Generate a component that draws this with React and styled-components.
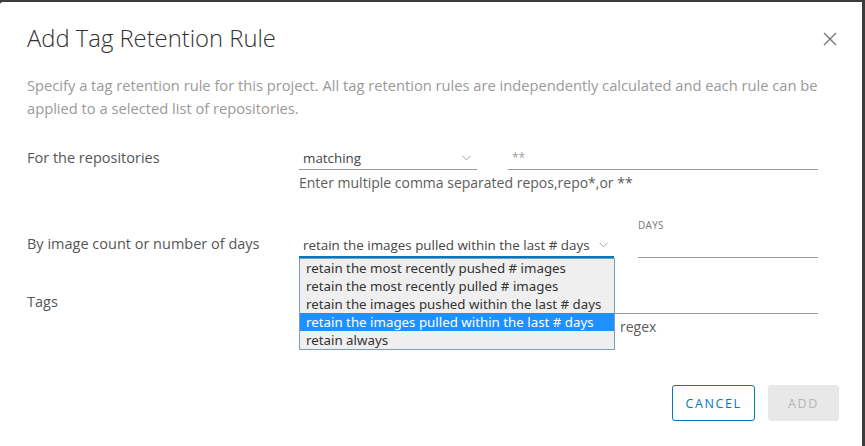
import React from "react";
import styled, { createGlobalStyle } from "styled-components";

const Global = createGlobalStyle`
  html, body { margin: 0; padding: 0; background: #3c3c3c; overflow: hidden; }
  body { font-family: "Open Sans", "Liberation Sans", sans-serif; }
  #root { height: 446px; }
`;

const Modal = styled.div`
  margin-top: 2px;
  width: 862px;
  height: 460px;
  background: #fff;
  border-top-left-radius: 3px;
  box-sizing: border-box;
  padding: 0 0 0 27px;
`;

const Header = styled.div`
  display: flex;
  align-items: center;
  justify-content: space-between;
  height: 72px;
  padding-right: 24px;
`;

const Title = styled.h3`
  margin: 0;
  font-size: 23.8px;
  font-weight: 300;
  color: #313131;
`;

const Close = styled.button`
  border: 0;
  background: none;
  padding: 0;
  width: 16px;
  height: 16px;
  display: flex;
  margin-top: 1px;
`;

const Desc = styled.p`
  margin: 0;
  font-size: 14.7px;
  line-height: 23px;
  color: #9a9a9a;
  padding-right: 12px;
`;

const Form = styled.div`
  margin-top: 26px;
  display: flex;
  flex-direction: column;
`;

const Row = styled.div`
  display: grid;
  grid-template-columns: 272px 1fr;
  align-items: start;
  margin-top: ${(p) => p.$mt || 0}px;
`;

const Label = styled.div`
  font-size: 14.5px;
  color: #565656;
  line-height: 20px;
  padding-top: ${(p) => p.$pt || 0}px;
`;

const Controls = styled.div`
  display: flex;
  flex-direction: column;
`;

const Line = styled.div`
  display: flex;
  align-items: flex-end;
  gap: ${(p) => p.$gap}px;
`;

const SelectWrap = styled.div`
  position: relative;
`;

const Select = styled.div`
  width: ${(p) => p.$w}px;
  height: 24px;
  box-sizing: border-box;
  display: flex;
  align-items: center;
  justify-content: space-between;
  padding: 0 6px 0 4px;
  border-bottom: ${(p) => (p.$focus ? "2px solid #0079b8" : "1px solid #9a9a9a")};
  font-size: 13.4px;
  color: #454545;
`;

const Input = styled.div`
  width: ${(p) => p.$w}px;
  height: 24px;
  box-sizing: border-box;
  padding: 0 4px;
  display: flex;
  align-items: center;
  border-bottom: 1px solid #9a9a9a;
  font-size: 12px;
  color: #a0a0a0;
`;

const Helper = styled.div`
  font-size: 14px;
  color: #5c5c5c;
  line-height: 20px;
  margin-top: ${(p) => p.$mt || 0}px;
  margin-left: ${(p) => p.$ml || 0}px;
`;

const FieldCol = styled.div`
  display: flex;
  flex-direction: column;
`;

const SmallLabel = styled.div`
  font-size: 10px;
  color: #777;
  letter-spacing: 0.3px;
  line-height: 14px;
  margin-bottom: 2px;
`;

const Listbox = styled.ul`
  position: absolute;
  left: 0;
  top: 100%;
  width: 316px;
  margin: 0;
  padding: 0;
  list-style: none;
  background: #efefef;
  border: 1px solid #7f9bc4;
  box-sizing: border-box;
  z-index: 2;
  font-family: "Noto Sans", "Open Sans", sans-serif;
  font-size: 13.3px;
`;

const Option = styled.li`
  height: 18px;
  line-height: 18px;
  padding-left: 6px;
  white-space: nowrap;
  color: ${(p) => (p.$sel ? "#fff" : "#333")};
  background: ${(p) => (p.$sel ? "#1e90ff" : "transparent")};
`;

const Footer = styled.div`
  display: flex;
  justify-content: flex-end;
  gap: 13px;
  padding-right: 23px;
  margin-top: 48px;
`;

const Button = styled.button`
  width: ${(p) => p.$w}px;
  height: 36px;
  box-sizing: border-box;
  padding: 0;
  border-radius: 3px;
  font-family: "Open Sans", sans-serif;
  font-size: 12.5px;
  letter-spacing: 1.6px;
  text-transform: uppercase;
  border: 1px solid ${(p) => (p.$primary ? "#e8e8e8" : "#0079b8")};
  background: ${(p) => (p.$primary ? "#e8e8e8" : "#fff")};
  color: ${(p) => (p.$primary ? "#b5b5b5" : "#0079b8")};
`;

const Chevron = () => (
  <svg width="9" height="6" viewBox="0 0 9 6" fill="none">
    <path d="M0.5 0.8l4 4 4-4" stroke="#a3a3a3" strokeWidth="1" />
  </svg>
);

const options = [
  "retain the most recently pushed # images",
  "retain the most recently pulled # images",
  "retain the images pushed within the last # days",
  "retain the images pulled within the last # days",
  "retain always",
];

export default function App() {
  return (
    <>
      <Global />
      <Modal>
        <Header>
          <Title>Add Tag Retention Rule</Title>
          <Close aria-label="close">
            <svg width="16" height="16" viewBox="0 0 16 16">
              <path d="M2 2l12 12M14 2L2 14" stroke="#737373" strokeWidth="1.3" />
            </svg>
          </Close>
        </Header>
        <Desc>
          Specify a tag retention rule for this project. All tag retention rules are independently calculated and each rule can be applied to a selected list of repositories.
        </Desc>
        <Form>
          <Row>
            <Label $pt={2}>For the repositories</Label>
            <Controls>
              <Line $gap={31}>
                <Select $w={178}>
                  <span>matching</span>
                  <Chevron />
                </Select>
                <Input $w={310}>**</Input>
              </Line>
              <Helper $mt={3}>Enter multiple comma separated repos,repo*,or **</Helper>
            </Controls>
          </Row>
          <Row $mt={25}>
            <Label $pt={16}>By image count or number of days</Label>
            <Controls>
              <Line $gap={24}>
                <SelectWrap>
                  <Select $w={315} $focus>
                    <span>retain the images pulled within the last # days</span>
                    <Chevron />
                  </Select>
                  <Listbox>
                    {options.map((o, i) => (
                      <Option key={o} $sel={i === 3}>{o}</Option>
                    ))}
                  </Listbox>
                </SelectWrap>
                <FieldCol>
                  <SmallLabel>DAYS</SmallLabel>
                  <Input $w={180} />
                </FieldCol>
              </Line>
            </Controls>
          </Row>
          <Row $mt={32}>
            <Label $pt={2}>Tags</Label>
            <Controls>
              <Input $w={519} />
              <Helper $mt={3} $ml={321}>regex</Helper>
            </Controls>
          </Row>
        </Form>
        <Footer>
          <Button $w={83}>Cancel</Button>
          <Button $w={71} $primary disabled>Add</Button>
        </Footer>
      </Modal>
    </>
  );
}
